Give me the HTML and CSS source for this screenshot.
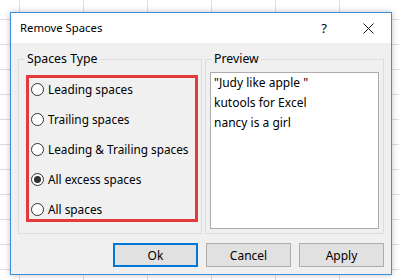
FILE: index.html
```html
<!DOCTYPE html>
<html>
<head>
<meta charset="utf-8">
<link rel="stylesheet" href="styles.css">
</head>
<body>
<div class="dialog">
  <div class="titlebar">
    <span class="title">Remove Spaces</span>
    <span class="help">?</span>
    <span class="close"><svg width="11" height="11" viewBox="0 0 11 11"><path d="M0.5 0.5 L10.5 10.5 M10.5 0.5 L0.5 10.5" stroke="#111" stroke-width="1" fill="none"/></svg></span>
  </div>
  <div class="content">
    <div class="groups">
      <fieldset class="group group-type">
        <legend>Spaces Type</legend>
        <div class="options">
          <label class="opt"><span class="radio"></span>Leading spaces</label>
          <label class="opt"><span class="radio"></span>Trailing spaces</label>
          <label class="opt"><span class="radio"></span>Leading &amp; Trailing spaces</label>
          <label class="opt"><span class="radio checked"></span>All excess spaces</label>
          <label class="opt"><span class="radio"></span>All spaces</label>
        </div>
      </fieldset>
      <fieldset class="group group-preview">
        <legend>Preview</legend>
        <div class="preview">
          <div>"Judy like apple "</div>
          <div>kutools for Excel</div>
          <div>nancy is a girl</div>
        </div>
      </fieldset>
    </div>
    <div class="buttons">
      <button class="btn btn-default">Ok</button>
      <button class="btn">Cancel</button>
      <button class="btn">Apply</button>
    </div>
  </div>
</div>
</body>
</html>
```

FILE: styles.css
```css
html, body {
  margin: 0;
  padding: 0;
}
body {
  width: 399px;
  height: 280px;
  overflow: hidden;
  background-color: #ffffff;
  background-image:
    linear-gradient(to right, #dedede 1px, transparent 1px),
    linear-gradient(to bottom, #dedede 1px, transparent 1px);
  background-size: 64px 25px;
  background-position: 19px 19px;
  font-family: "Noto Sans", "DejaVu Sans", sans-serif;
  font-size: 12px;
  color: #000;
  padding-top: 12px;
  box-sizing: border-box;
}
.dialog {
  margin-left: 10px;
  width: 382px;
  height: 263px;
  box-sizing: border-box;
  border: 1px solid #3d8fd8;
  background: #f0f0f0;
  box-shadow: 0 0 6px rgba(0, 0, 0, 0.25);
  display: flex;
  flex-direction: column;
}
.titlebar {
  height: 30px;
  background: #ffffff;
  display: flex;
  align-items: center;
  padding-left: 9px;
  flex: none;
}
.title {
  flex: 1;
  line-height: 16px;
  font-size: 11.3px;
}
.help {
  width: 10px;
  font-size: 13px;
  margin-right: 34px;
  text-align: center;
}
.close {
  display: flex;
  margin-right: 17px;
}
.content {
  flex: 1;
  padding: 8px 7px 6px 7px;
  display: flex;
  flex-direction: column;
}
.groups {
  display: flex;
  gap: 3px;
  height: 183px;
}
.group {
  margin: 0;
  padding: 0;
  min-width: 0;
  border: 1px solid #dcdcdc;
  box-sizing: border-box;
}
.group legend {
  padding: 0 2px;
  margin-left: 6px;
  line-height: 16px;
  font-size: 12.3px;
}
.group-type {
  width: 184px;
}
.group-preview {
  width: 179px;
}
.options {
  margin: 8px 0 0 7px;
  width: 172px;
  box-sizing: border-box;
  border: 3px solid #e5393b;
  padding-top: 1px;
  display: flex;
  flex-direction: column;
  gap: 10px;
  height: 147px;
}
.opt {
  display: flex;
  align-items: center;
  height: 20px;
  padding-left: 2px;
  white-space: nowrap;
  font-size: 11.8px;
}
.radio {
  width: 13px;
  height: 13px;
  box-sizing: border-box;
  border: 1px solid #333;
  border-radius: 50%;
  background: #fff;
  margin-right: 4px;
  flex: none;
  display: flex;
  align-items: center;
  justify-content: center;
}
.radio.checked::after {
  content: "";
  width: 7px;
  height: 7px;
  border-radius: 50%;
  background: #333;
}
.preview {
  margin: 5px 0 0 4px;
  width: 169px;
  height: 157px;
  box-sizing: border-box;
  background: #fff;
  border: 1px solid #acacac;
  padding: 0 3px;
  line-height: 20px;
}
.buttons {
  margin-top: 9px;
  display: flex;
  justify-content: flex-end;
  gap: 8px;
}
.btn {
  width: 85px;
  height: 24px;
  box-sizing: border-box;
  border: 1px solid #adadad;
  background: #e1e1e1;
  font-family: inherit;
  font-size: 12px;
  color: #000;
  padding: 0;
  margin: 0;
}
.btn-default {
  border: 2px solid #0078d7;
}
```
